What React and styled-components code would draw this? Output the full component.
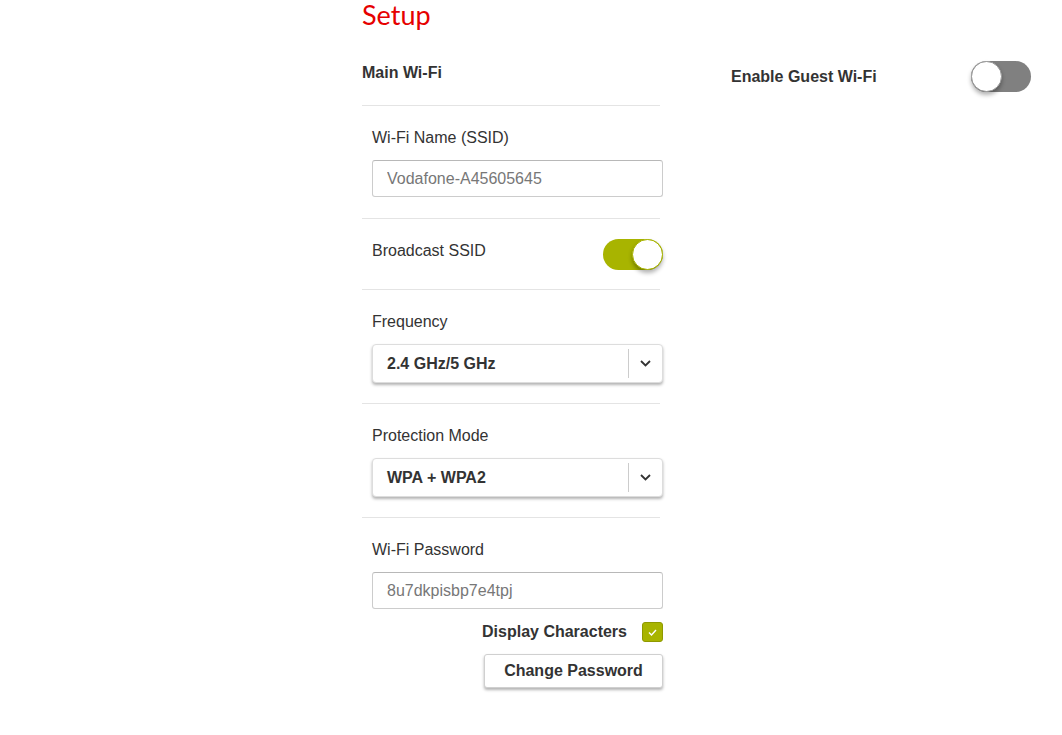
import React, { useState } from 'react';
import styled, { createGlobalStyle } from 'styled-components';

const GlobalStyle = createGlobalStyle`
  html, body {
    margin: 0;
    padding: 0;
    background: #ffffff;
  }
  body {
    font-family: 'Liberation Sans', Arial, sans-serif;
    color: #333333;
  }
`;

const Page = styled.div`
  padding-left: 362px;
  width: 1062px;
  box-sizing: border-box;
`;

const Title = styled.h1`
  margin: 0;
  height: 30px;
  font-family: Lato, 'Open Sans', sans-serif;
  font-weight: 400;
  font-size: 27px;
  line-height: 30px;
  color: #e60000;
`;

const Columns = styled.div`
  display: flex;
  align-items: flex-start;
`;

const LeftColumn = styled.div`
  width: 298px;
`;

const RightColumn = styled.div`
  width: 300px;
  margin-left: 71px;
`;

const Header = styled.div`
  padding: 34px 0 23px;
  font-size: 16px;
  line-height: 18px;
  font-weight: 700;
  border-bottom: 1px solid #e4e4e4;
`;

const Section = styled.div`
  padding: ${(p) => p.$pad || '23px 0 20px 10px'};
  border-bottom: ${(p) => (p.$last ? 'none' : '1px solid #e4e4e4')};
`;

const InlineRow = styled.div`
  display: flex;
  align-items: flex-start;
  justify-content: space-between;
  width: 291px;
`;

const Label = styled.div`
  font-size: 16px;
  line-height: 18px;
  margin-top: ${(p) => p.$top || 0}px;
  font-weight: ${(p) => (p.$bold ? 700 : 400)};
`;

const TextInput = styled.input`
  display: block;
  box-sizing: border-box;
  margin-top: 13px;
  width: 291px;
  height: 37px;
  padding: 0 14px;
  border: 1px solid #cccccc;
  border-top-color: #b8b8b8;
  border-radius: 3px;
  font-family: 'Liberation Sans', Arial, sans-serif;
  font-size: 16px;
  color: #777777;
  background: #fff;
  outline: none;
`;

const SelectBox = styled.div`
  box-sizing: border-box;
  margin-top: 13px;
  width: 291px;
  height: 39px;
  display: flex;
  align-items: center;
  border: 1px solid #dddddd;
  border-radius: 4px;
  box-shadow: 0 2px 3px rgba(0, 0, 0, 0.3);
  background: #fff;
`;

const SelectValue = styled.div`
  flex: 1;
  padding-left: 14px;
  font-size: 16px;
  font-weight: 700;
  color: #333;
`;

const SelectArrow = styled.div`
  width: 33px;
  height: 29px;
  border-left: 1px solid #cccccc;
  display: flex;
  align-items: center;
  justify-content: center;
`;

const Track = styled.div`
  position: relative;
  width: 60px;
  height: 31px;
  border-radius: 16px;
  background: ${(p) => (p.$on ? '#a8b400' : '#808080')};
  cursor: pointer;
  flex-shrink: 0;
`;

const Knob = styled.div`
  position: absolute;
  top: 0;
  left: ${(p) => (p.$on ? '29px' : '0')};
  width: 31px;
  height: 31px;
  box-sizing: border-box;
  border-radius: 50%;
  background: #fff;
  border: 1px solid ${(p) => (p.$on ? '#a8b400' : '#9a9a9a')};
  box-shadow: 0 3px 4px rgba(0, 0, 0, 0.3);
`;

const GuestRow = styled.div`
  display: flex;
  align-items: center;
  justify-content: space-between;
  margin-top: 31px;
`;

const CheckRow = styled.div`
  display: flex;
  justify-content: flex-end;
  align-items: center;
  gap: 15px;
  width: 291px;
  margin-top: 13px;
`;

const Checkbox = styled.div`
  width: 21px;
  height: 20px;
  box-sizing: border-box;
  border-radius: 3px;
  background: #a8b400;
  border: 1px solid #8f9900;
  display: flex;
  align-items: center;
  justify-content: center;
`;

const ButtonRow = styled.div`
  display: flex;
  justify-content: flex-end;
  width: 291px;
  margin-top: 12px;
`;

const Button = styled.button`
  width: 179px;
  height: 34px;
  border: 1px solid #d0d0d0;
  border-radius: 3px;
  background: #fff;
  box-shadow: 0 2px 3px rgba(0, 0, 0, 0.3);
  font-family: 'Liberation Sans', Arial, sans-serif;
  font-size: 16px;
  font-weight: 700;
  color: #333;
  cursor: pointer;
`;

const Toggle = ({ on, onClick }) => (
  <Track $on={on} onClick={onClick}>
    <Knob $on={on} />
  </Track>
);

const Chevron = () => (
  <svg width="11" height="7" viewBox="0 0 11 7">
    <path d="M1 1 L5.5 5.5 L10 1" fill="none" stroke="#333" strokeWidth="1.8" />
  </svg>
);

const Select = ({ value }) => (
  <SelectBox>
    <SelectValue>{value}</SelectValue>
    <SelectArrow>
      <Chevron />
    </SelectArrow>
  </SelectBox>
);

const App = () => {
  const [broadcast, setBroadcast] = useState(true);
  const [guest, setGuest] = useState(false);

  return (
    <Page>
      <GlobalStyle />
      <Title>Setup</Title>
      <Columns>
        <LeftColumn>
          <Header>Main Wi-Fi</Header>
          <Section $pad="23px 0 21px 10px">
            <Label>Wi-Fi Name (SSID)</Label>
            <TextInput defaultValue="Vodafone-A45605645" />
          </Section>
          <Section $pad="20px 0 19px 10px">
            <InlineRow>
              <Label $top={3}>Broadcast SSID</Label>
              <Toggle on={broadcast} onClick={() => setBroadcast(!broadcast)} />
            </InlineRow>
          </Section>
          <Section>
            <Label>Frequency</Label>
            <Select value="2.4 GHz/5 GHz" />
          </Section>
          <Section>
            <Label>Protection Mode</Label>
            <Select value="WPA + WPA2" />
          </Section>
          <Section $last>
            <Label>Wi-Fi Password</Label>
            <TextInput defaultValue="8u7dkpisbp7e4tpj" />
            <CheckRow>
              <Label $bold>Display Characters</Label>
              <Checkbox>
                <svg width="9" height="7" viewBox="0 0 9 7">
                  <path d="M1 3.5 L3.5 6 L8 1" fill="none" stroke="#fff" strokeWidth="1.4" />
                </svg>
              </Checkbox>
            </CheckRow>
            <ButtonRow>
              <Button>Change Password</Button>
            </ButtonRow>
          </Section>
        </LeftColumn>
        <RightColumn>
          <GuestRow>
            <Label $bold>Enable Guest Wi-Fi</Label>
            <Toggle on={guest} onClick={() => setGuest(!guest)} />
          </GuestRow>
        </RightColumn>
      </Columns>
    </Page>
  );
};

export default App;
